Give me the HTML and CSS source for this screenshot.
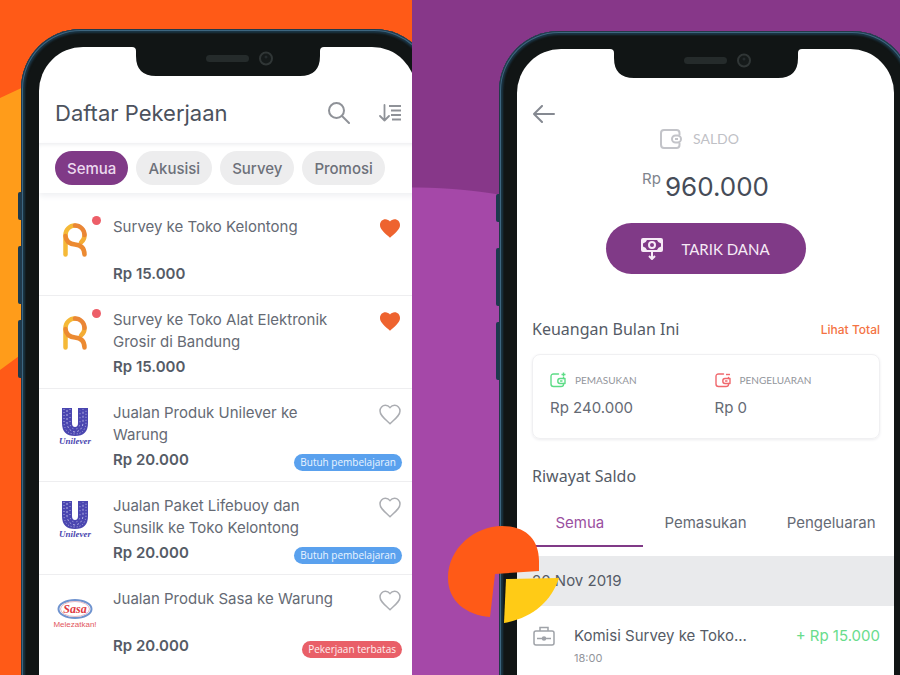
FILE: index.html
```html
<!DOCTYPE html>
<html lang="id">
<head>
<meta charset="utf-8">
<meta name="viewport" content="width=device-width, initial-scale=1">
<title>Daftar Pekerjaan dan Saldo</title>
<link rel="stylesheet" href="styles.css">
</head>
<body>
<svg class="defs" aria-hidden="true">
  <symbol id="notch" viewBox="0 0 192 29">
    <path d="M0 0H192Q188 0 188 4V9Q188 29 168 29H24Q4 29 4 9V4Q4 0 0 0Z" fill="#111515"/>
    <rect x="74" y="8" width="43" height="7" rx="3.5" fill="#252b2b"/>
    <circle cx="134" cy="11.500" r="6" fill="#151a1a" stroke="#303636" stroke-width="2"/>
    <circle cx="134" cy="10" r="1.500" fill="#252b2d"/>
  </symbol>
  <symbol id="heart" viewBox="0 0 22 21">
    <path d="M11 19.700L9.400 18.200C4.200 13.600 1 10.700 1 6.900C1 3.700 3.400 1.300 6.400 1.300C8.200 1.300 9.900 2.200 11 3.600C12.100 2.200 13.800 1.300 15.600 1.300C18.600 1.300 21 3.700 21 6.900C21 10.700 17.800 13.600 12.600 18.200Z"/>
  </symbol>
  <symbol id="logo-r" viewBox="0 0 26 36">
    <g fill="none" stroke-width="4.500" stroke-linecap="round">
      <path d="M3.500 32.500V13A9.500 9.500 0 0 1 13 3.500" stroke="#f5b937"/>
      <path d="M19 20.500A9.500 9.500 0 0 0 22.500 13" stroke="#f4ad35"/>
      <path d="M13 3.500A9.500 9.500 0 0 1 22.500 13" stroke="#ea8636"/>
      <path d="M3.500 14C4 19.500 8 22 13 22.500C19 23 22.500 26 22.500 32.500" stroke="#ec8a31"/>
    </g>
  </symbol>
  <symbol id="mark-u" viewBox="0 0 26 28">
    <path d="M0 0H10V15Q10 19 13 19Q16 19 16 15V0H26V15Q26 28 13 28Q0 28 0 15Z" fill="#4a46b0"/>
    <g stroke="#b5b2e4" stroke-width="1" fill="none">
      <path d="M2 1V15Q3 26 13 26Q23 26 24 15V1" stroke-dasharray="1 2"/>
      <path d="M5 2V15Q6 23 13 24Q20 23 21 15V1" stroke-dasharray="2 2"/>
      <path d="M8 1V16Q9 21 13 21Q17 21 18 16V2" stroke-dasharray="1 3"/>
    </g>
  </symbol>
  <symbol id="wallet-flow" viewBox="0 0 16 16">
    <g fill="none" stroke="currentColor" stroke-width="1.400" stroke-linecap="round" stroke-linejoin="round">
      <path d="M8.500 2H3.500Q1 2 1 4.500V12Q1 14.500 3.500 14.500H11Q13.500 14.500 13.500 12.500V11.500M13.500 6.500V5.500"/>
      <path d="M10 6.500H15V11.500H10Q7.800 11.500 7.800 9T10 6.500Z"/>
      <path d="M10.500 9H12"/>
    </g>
  </symbol>
</svg>

<main class="showcase">
  <section class="panel panel-jobs">
    <div class="phone">
      <i class="key key-mute"></i><i class="key key-up"></i><i class="key key-down"></i>
      <div class="screen">
        <svg class="notch" aria-hidden="true"><use href="#notch"/></svg>
        <header class="jobs-head">
          <h1>Daftar Pekerjaan</h1>
          <button class="icon-btn" aria-label="Cari">
            <svg width="22" height="22" viewBox="0 0 22 22" fill="none" stroke="#8f9298" stroke-width="2" stroke-linecap="round"><circle cx="8.500" cy="8.500" r="7.500"/><path d="M14 14L21 21"/></svg>
          </button>
          <button class="icon-btn" aria-label="Urutkan">
            <svg width="22" height="18" viewBox="0 0 22 18" fill="none" stroke="#8f9298" stroke-width="1.800"><path d="M5.500 1V16.500M1 12L5.500 16.500L10 12" stroke-linecap="round" stroke-linejoin="round"/><path d="M10 2H22M12 6.500H22M12 11H22M13 15.500H22"/></svg>
          </button>
        </header>
        <nav class="chips">
          <button class="chip chip-on">Semua</button>
          <button class="chip">Akusisi</button>
          <button class="chip">Survey</button>
          <button class="chip">Promosi</button>
        </nav>
        <ul class="jobs">
          <li class="job">
            <div class="logo logo-new"><svg width="26" height="36" aria-hidden="true"><use href="#logo-r"/></svg></div>
            <div class="job-text"><h2>Survey ke Toko Kelontong</h2><p class="price">Rp 15.000</p></div>
            <button class="fav fav-on" aria-label="Favorit"><svg width="22" height="21"><use href="#heart"/></svg></button>
          </li>
          <li class="job">
            <div class="logo logo-new"><svg width="26" height="36" aria-hidden="true"><use href="#logo-r"/></svg></div>
            <div class="job-text"><h2>Survey ke Toko Alat Elektronik Grosir di Bandung</h2><p class="price">Rp 15.000</p></div>
            <button class="fav fav-on" aria-label="Favorit"><svg width="22" height="21"><use href="#heart"/></svg></button>
          </li>
          <li class="job">
            <div class="logo"><svg width="26" height="28" aria-hidden="true"><use href="#mark-u"/></svg><span class="wordmark">Unilever</span></div>
            <div class="job-text"><h2>Jualan Produk Unilever ke Warung</h2><p class="price">Rp 20.000</p></div>
            <button class="fav" aria-label="Favorit"><svg width="22" height="21"><use href="#heart"/></svg></button>
            <span class="badge badge-learn">Butuh pembelajaran</span>
          </li>
          <li class="job">
            <div class="logo"><svg width="26" height="28" aria-hidden="true"><use href="#mark-u"/></svg><span class="wordmark">Unilever</span></div>
            <div class="job-text"><h2>Jualan Paket Lifebuoy dan Sunsilk ke Toko Kelontong</h2><p class="price">Rp 20.000</p></div>
            <button class="fav" aria-label="Favorit"><svg width="22" height="21"><use href="#heart"/></svg></button>
            <span class="badge badge-learn">Butuh pembelajaran</span>
          </li>
          <li class="job">
            <div class="logo">
              <svg width="44" height="40" viewBox="0 0 44 40">
                <ellipse cx="22" cy="15" rx="16.500" ry="9" fill="#fff" stroke="#6f93cf" stroke-width="2"/>
                <ellipse cx="22" cy="15" rx="14.500" ry="7.500" fill="none" stroke="#e7b9c2" stroke-width="1"/>
                <text x="22" y="19" text-anchor="middle" class="script" font-size="12" fill="#e0393f">Sasa</text>
                <text x="22" y="33" text-anchor="middle" class="tagline" font-size="8" fill="#e2575d">Melezatkan!</text>
              </svg>
            </div>
            <div class="job-text"><h2>Jualan Produk Sasa ke Warung</h2><p class="price">Rp 20.000</p></div>
            <button class="fav" aria-label="Favorit"><svg width="22" height="21"><use href="#heart"/></svg></button>
            <span class="badge badge-limit">Pekerjaan terbatas</span>
          </li>
        </ul>
      </div>
    </div>
  </section>

  <section class="panel panel-wallet">
    <div class="phone">
      <i class="key key-mute"></i><i class="key key-up"></i><i class="key key-down"></i>
      <div class="screen">
        <svg class="notch" aria-hidden="true"><use href="#notch"/></svg>
        <header class="wallet-head">
          <button class="icon-btn" aria-label="Kembali">
            <svg width="22" height="18" viewBox="0 0 22 18" fill="none" stroke="#858991" stroke-width="2" stroke-linecap="round" stroke-linejoin="round"><path d="M21 9H1M9 1L1 9L9 17"/></svg>
          </button>
        </header>
        <div class="balance">
          <p class="balance-label">
            <svg width="22" height="20" viewBox="0 0 22 20" fill="none" stroke="#c3c4c9" stroke-width="2"><path d="M19.500 6V4Q19.500 1 16.500 1H4Q1 1 1 4V15.500Q1 19 4 19H16.500Q19.500 19 19.500 16V14"/><rect x="12" y="6.500" width="9" height="7" rx="3.500"/><path d="M15 10H18"/></svg>
            SALDO
          </p>
          <p class="amount"><span class="currency">Rp</span>960.000</p>
          <button class="withdraw">
            <svg width="22" height="22" viewBox="0 0 22 22"><path fill="#f6eaf6" fill-rule="evenodd" d="M2 0H20Q22 0 22 2V12Q22 14 20 14H2Q0 14 0 12V2Q0 0 2 0ZM6 2Q5 5 2 5.500V8.500Q5 9 6 12H16Q17 9 20 8.500V5.500Q17 5 16 2Z"/><circle cx="11" cy="7" r="3" fill="none" stroke="#f6eaf6" stroke-width="2"/><path d="M11 13V20M8 18L11 21L14 18" fill="none" stroke="#f6eaf6" stroke-width="2"/></svg>
            TARIK DANA
          </button>
        </div>
        <div class="section-head"><h2>Keuangan Bulan Ini</h2><a href="#total">Lihat Total</a></div>
        <dl class="summary">
          <div class="summary-cell">
            <dt><svg class="income" width="16" height="16"><use href="#wallet-flow"/><path d="M11.500 2.500H15.500M13.500 0.500V4.500" stroke="currentColor" stroke-width="1.400"/></svg>PEMASUKAN</dt>
            <dd>Rp 240.000</dd>
          </div>
          <div class="summary-cell">
            <dt><svg class="expense" width="16" height="16"><use href="#wallet-flow"/><path d="M11 2.500H15" stroke="currentColor" stroke-width="1.400"/></svg>PENGELUARAN</dt>
            <dd>Rp 0</dd>
          </div>
        </dl>
        <div class="section-head history-head"><h2>Riwayat Saldo</h2></div>
        <nav class="tabs">
          <button class="tab tab-on">Semua</button>
          <button class="tab">Pemasukan</button>
          <button class="tab">Pengeluaran</button>
        </nav>
        <h3 class="date">20 Nov 2019</h3>
        <div class="entry">
          <svg width="22" height="20" viewBox="0 0 22 20" fill="none" stroke="#9fa2a8" stroke-width="1.500"><rect x="1" y="5" width="20" height="14" rx="2"/><path d="M7 5V1.500H15V5M4 12.500H18"/><circle cx="11" cy="12.500" r="1.500" fill="#9fa2a8"/></svg>
          <div class="entry-text"><p>Komisi Survey ke Toko...</p><time>18:00</time></div>
          <span class="entry-amount">+ Rp 15.000</span>
        </div>
      </div>
    </div>
    <svg class="pie" width="112" height="98" viewBox="0 0 112 98" aria-hidden="true">
      <path fill="#ff5a17" d="M47 48L91 45V35C91 12 76 0 54 0C27 0 0 22 0 52C0 75 18 89 42 91Z"/>
      <path fill="#ffcb16" d="M58 53L111 52C103 76 84 92 56 97Z"/>
    </svg>
  </section>
</main>
</body>
</html>
```
FILE: styles.css
```css
* { box-sizing: border-box; }
body, h1, h2, h3, p, ul, dl, dd { margin: 0; }
body {
  font-family: Inter, "Noto Sans", sans-serif;
  color: #555b66;
}
button {
  border: 0;
  padding: 0;
  background: none;
  font: inherit;
  color: inherit;
  cursor: pointer;
}
svg { display: block; flex: none; }
.defs { position: absolute; width: 0; height: 0; }
.script { font-family: "Liberation Serif", serif; font-style: italic; font-weight: 700; }
.tagline { font-family: "Liberation Sans", sans-serif; }

.showcase {
  display: grid;
  grid-template-columns: 412fr 488fr;
  height: 100vh;
  min-height: 675px;
}
.panel {
  position: relative;
  display: flex;
  min-width: 0;
  overflow: hidden;
}
.panel-jobs {
  padding: 29px 0 0 21px;
  background: #ff5a17;
}
/* Amber blob showing beside the device */
.panel-jobs::before {
  content: "";
  position: absolute;
  top: 84px;
  left: 0;
  width: 30px;
  height: 286px;
  background: #ff9c1a;
  clip-path: polygon(0 14px, 100% 0, 100% 264px, 0 100%);
}
.panel-wallet {
  padding: 31px 0 0 87px;
  background: radial-gradient(circle at 0 728px, #a548a8 540px, #873789 541px);
}

/* Device frame */
.phone {
  position: relative;
  flex: none;
  display: flex;
  width: calc(100% + 22px);
  margin-bottom: -20px;
  padding: 18px 18px 0;
  border-radius: 60px 60px 0 0;
  background: #111515;
  box-shadow: inset 0 0 0 1px #24394a, inset 0 0 0 2px #3d6680, inset 0 0 2px 4px #1b3545;
}
.panel-wallet .phone { width: calc(100% + 12px); }
.key {
  position: absolute;
  left: -3px;
  width: 3px;
  height: 58px;
  border-radius: 2px 0 0 2px;
  background: #1c3a4e;
}
.key-mute { top: 163px; height: 28px; }
.key-up { top: 217px; }
.key-down { top: 291px; }
.screen {
  flex: 1;
  min-width: 0;
  overflow: hidden;
  border-radius: 44px 44px 0 0;
  background: #fff;
}
.notch { width: 192px; height: 29px; margin: 0 auto; }

/* Job list */
.jobs-head {
  display: flex;
  align-items: center;
  gap: 29px;
  height: 67px;
  padding: 7px 15px 0 16px;
}
.jobs-head h1 {
  flex: 1;
  font-size: 22px;
  line-height: 28px;
  font-weight: 400;
  color: #4c525d;
}
.chips {
  display: flex;
  gap: 8px;
  padding: 8px 16px;
  box-shadow: inset 0 4px 5px -3px #e8e9ec, 0 3px 6px #eff0f3;
}
.chip {
  height: 34px;
  padding: 0 12px;
  border-radius: 17px;
  background: #ededee;
  font-size: 15px;
  font-weight: 500;
  color: #6d717a;
}
.chip-on { background: #803a87; color: #ecd9ee; }
.jobs { padding: 10px 0 0; list-style: none; }
.job {
  position: relative;
  display: grid;
  grid-template-columns: 40px 240px 1fr;
  column-gap: 18px;
  min-height: 93px;
  padding: 13px 15px 7px 16px;
  border-bottom: 1px solid #eeeef0;
}
.job:last-child { border-bottom: 0; }
.logo {
  position: relative;
  display: flex;
  flex-direction: column;
  align-items: center;
  height: 50px;
  padding-top: 6px;
}
.logo-new::after {
  content: "";
  position: absolute;
  top: 0;
  right: -6px;
  width: 9px;
  height: 9px;
  border-radius: 50%;
  background: #ed5e68;
}
.wordmark {
  font: italic 700 9px/10px "Liberation Serif", serif;
  color: #4a46b0;
}
.job h2 {
  min-height: 44px;
  font-size: 15px;
  line-height: 22px;
  font-weight: 400;
  color: #656a74;
}
.price { font-size: 15px; line-height: 28px; font-weight: 600; }
.fav {
  justify-self: end;
  align-self: start;
  padding-top: 2px;
}
.fav svg { fill: none; stroke: #abadb2; stroke-width: 1.5px; }
.fav-on svg { fill: #ee632f; stroke: none; }
.badge {
  position: absolute;
  right: 14px;
  bottom: 10px;
  padding: 0 6px;
  border-radius: 9px;
  font: 10px/17px "Open Sans", sans-serif;
  color: #eaf4ff;
}
.badge-learn { background: #5aa1ee; }
.badge-limit { background: #e95f68; color: #fff0f0; }

/* Wallet */
.wallet-head { padding: 27px 16px 0; }
.balance {
  display: flex;
  flex-direction: column;
  align-items: center;
  padding-top: 1px;
}
.balance-label {
  display: flex;
  align-items: center;
  gap: 11px;
  margin-right: 12px;
  font: 14px/22px Lato, sans-serif;
  color: #bfc1c6;
}
.amount {
  display: flex;
  align-items: flex-start;
  gap: 4px;
  padding-top: 19px;
  font-size: 26px;
  line-height: 36px;
  color: #464c58;
}
.currency { font-size: 15px; line-height: 20px; color: #80848c; }
.withdraw {
  display: flex;
  align-items: center;
  justify-content: center;
  gap: 18px;
  width: 200px;
  height: 51px;
  margin-top: 18px;
  border-radius: 26px;
  background: #803a87;
  font: 15px/20px Lato, sans-serif;
  color: #f6eaf6;
}
.section-head {
  display: flex;
  align-items: center;
  justify-content: space-between;
  padding: 43px 14px 0 15px;
}
.section-head h2 { font: 16px/24px "Noto Sans", sans-serif; }
.section-head a { font-size: 12px; font-weight: 500; color: #f47343; text-decoration: none; }
.summary {
  display: grid;
  grid-template-columns: 1fr 1fr;
  margin: 13px 14px 0 15px;
  padding: 16px 0 18px 17px;
  border: 1px solid #f0f0f2;
  border-radius: 8px;
  box-shadow: 0 1px 3px #ececef;
}
.summary dt {
  display: flex;
  align-items: center;
  gap: 9px;
  font: 10px/18px Lato, sans-serif;
  color: #92959b;
}
.summary dd {
  padding-top: 7px;
  font-size: 15px;
  line-height: 24px;
  color: #656a74;
}
.income { color: #5ddc86; }
.expense { color: #f0686d; }
.history-head { padding-top: 25px; }
.tabs {
  display: grid;
  grid-template-columns: repeat(3, 1fr);
  margin-top: 11px;
}
.tab {
  height: 48px;
  border-bottom: 2px solid transparent;
  font-size: 15px;
  color: #656a74;
}
.tab-on { border-color: #803a87; color: #9a50a0; }
.date {
  margin-top: 9px;
  padding: 0 15px;
  background: #e9eaec;
  font-size: 15px;
  line-height: 50px;
  font-weight: 400;
}
.entry {
  display: flex;
  gap: 19px;
  padding: 18px 14px 0 16px;
}
.entry svg { margin-top: 2px; }
.entry-text { flex: 1; font-size: 15px; line-height: 24px; }
.entry time { display: block; font-size: 11px; line-height: 20px; color: #92959b; }
.entry-amount { font-size: 15px; line-height: 24px; color: #68dc8c; }
.pie { position: absolute; left: 36px; top: 526px; }
```
